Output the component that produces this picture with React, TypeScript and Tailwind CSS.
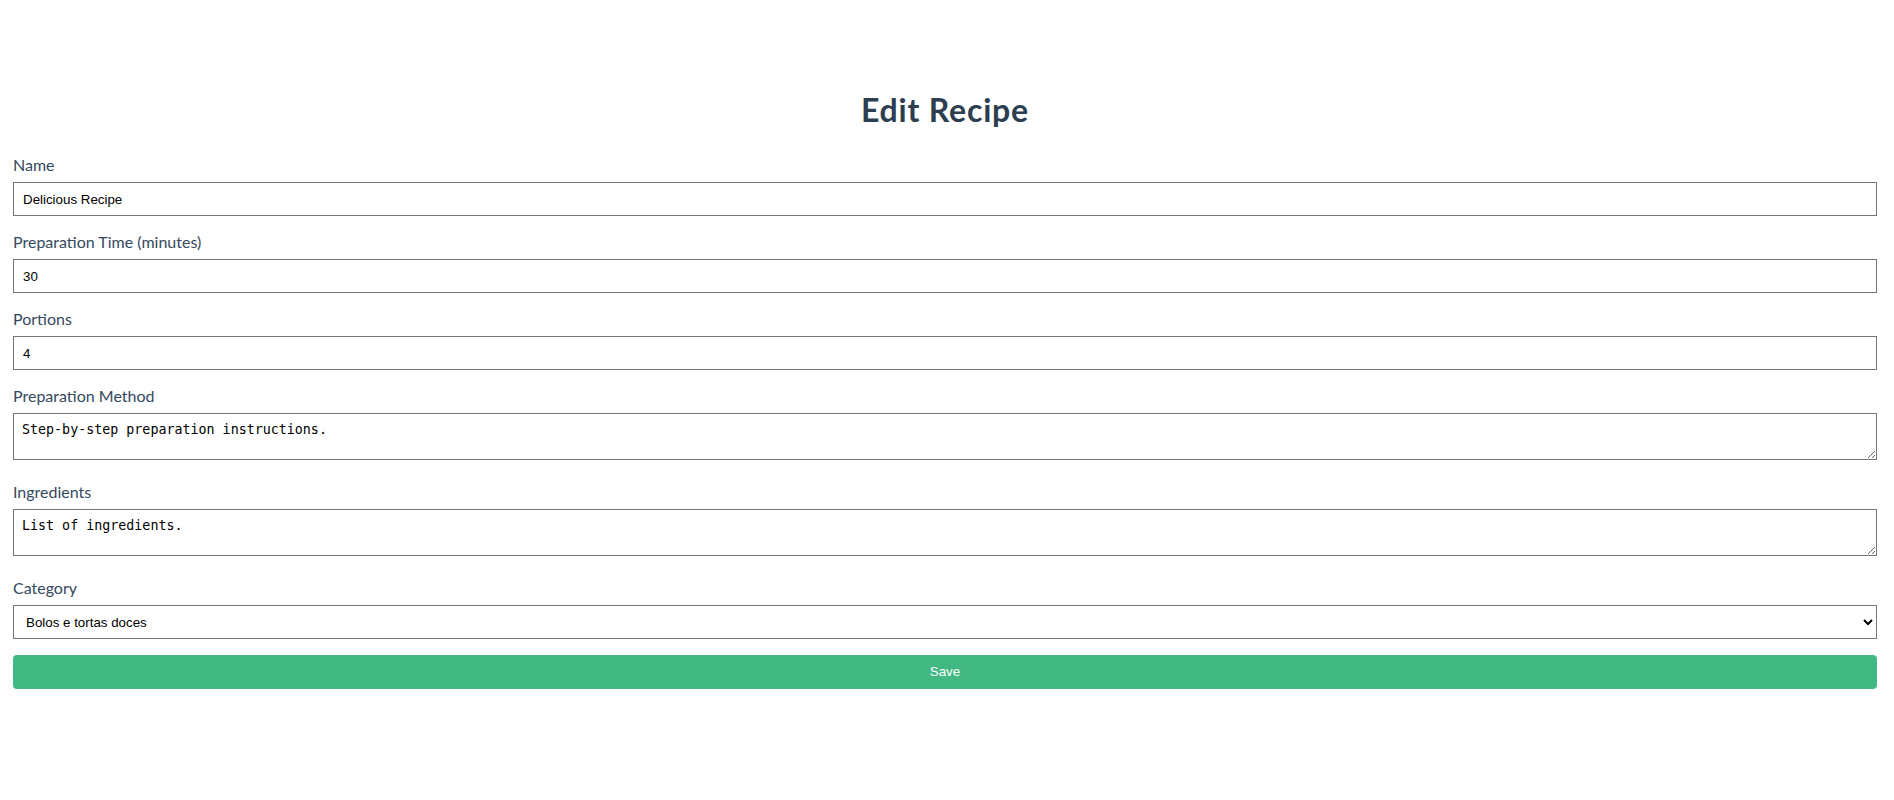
import { useState } from 'react'

const labelCls = "block text-[16px] leading-[24px] mb-[5px] text-[#34495e] font-['Lato',sans-serif]"
const inputCls = "block w-full h-[34px] px-[9px] border border-[#767676] bg-white text-black text-[13.33px] font-['Liberation_Sans',Arial,sans-serif] outline-none"
const areaCls = "w-full h-[47px] p-2 border border-[#767676] bg-white text-black text-[13.33px] leading-[15px] font-['DejaVu_Sans_Mono',monospace] align-baseline outline-none"

export default function App() {
  const [name, setName] = useState('Delicious Recipe')
  const [time, setTime] = useState('30')
  const [portions, setPortions] = useState('4')
  const [method, setMethod] = useState('Step-by-step preparation instructions.')
  const [ingredients, setIngredients] = useState('List of ingredients.')
  const [category, setCategory] = useState('Bolos e tortas doces')

  return (
    <div className="min-h-[800px] bg-white pl-[13px] pr-[17px] pt-[91px] font-['Lato',sans-serif]">
      <h1 className="text-center text-[32px] leading-[38px] tracking-[0.8px] font-bold text-[#2c3e50] mb-[24px]">
        Edit Recipe
      </h1>
      <form onSubmit={e => e.preventDefault()}>
        <div className="mb-[14px]">
          <label className={labelCls}>Name</label>
          <input className={inputCls} value={name} onChange={e => setName(e.target.value)} />
        </div>
        <div className="mb-[14px]">
          <label className={labelCls}>Preparation Time (minutes)</label>
          <input className={inputCls} value={time} onChange={e => setTime(e.target.value)} />
        </div>
        <div className="mb-[14px]">
          <label className={labelCls}>Portions</label>
          <input className={inputCls} value={portions} onChange={e => setPortions(e.target.value)} />
        </div>
        <div className="mb-[14px]">
          <label className={labelCls}>Preparation Method</label>
          <div className="h-[53px]">
            <textarea className={areaCls} value={method} onChange={e => setMethod(e.target.value)} />
          </div>
        </div>
        <div className="mb-[14px]">
          <label className={labelCls}>Ingredients</label>
          <div className="h-[53px]">
            <textarea className={areaCls} value={ingredients} onChange={e => setIngredients(e.target.value)} />
          </div>
        </div>
        <div className="mb-[16px]">
          <label className={labelCls}>Category</label>
          <select
            className="block w-full h-[34px] pl-[8px] pr-1 border border-[#767676] bg-white text-black text-[13.33px] font-['Liberation_Sans',Arial,sans-serif] outline-none"
            value={category}
            onChange={e => setCategory(e.target.value)}
          >
            <option>Bolos e tortas doces</option>
            <option>Carnes</option>
            <option>Aves</option>
            <option>Peixes e frutos do mar</option>
            <option>Saladas, molhos e acompanhamentos</option>
            <option>Sopas</option>
            <option>Massas</option>
            <option>Bebidas</option>
            <option>Doces e sobremesas</option>
            <option>Lanches</option>
          </select>
        </div>
        <button
          type="submit"
          className="block w-full h-[34px] rounded-[4px] bg-[#42b983] text-white text-[13.33px] font-['Liberation_Sans',Arial,sans-serif]"
        >
          Save
        </button>
      </form>
    </div>
  )
}
